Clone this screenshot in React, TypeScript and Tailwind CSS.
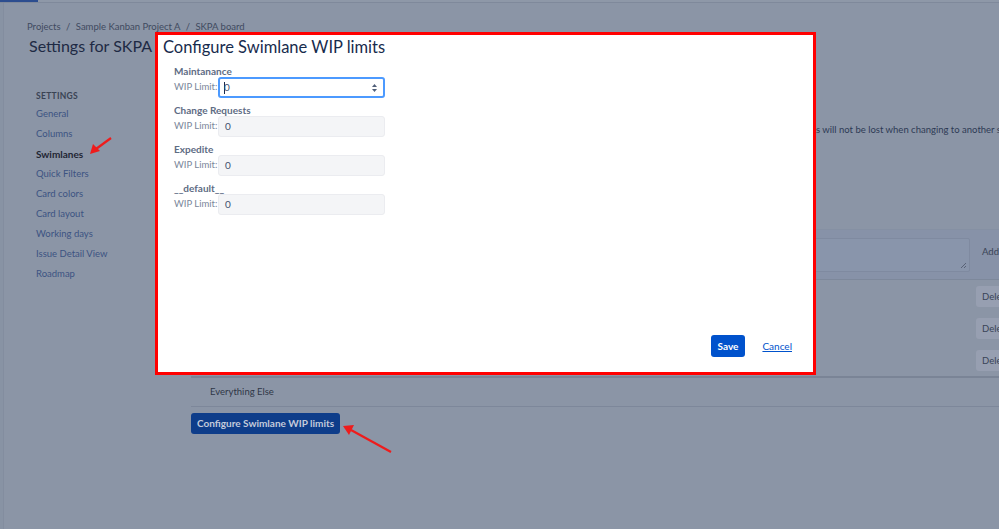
import React from "react";

const nav = ["General", "Columns", "Swimlanes", "Quick Filters", "Card colors", "Card layout", "Working days", "Issue Detail View", "Roadmap"];

function Field({ name, focused }: { name: string; focused?: boolean }) {
  return (
    <div className="flex flex-col mb-[5px]">
      <div className="h-[13px] text-[10px] leading-[15px] font-bold text-[#5e6c84] whitespace-nowrap">{name}</div>
      <div className="flex items-center h-[21px]">
        <span className="text-[9.5px] text-[#7a869a] w-[44px] shrink-0 whitespace-nowrap">WIP Limit:</span>
        {focused ? (
          <div className="relative w-[167px] h-[21px] rounded-[3px] border-2 border-[#4c9aff] bg-white flex items-center pl-[4px]">
            <span className="w-px h-[12px] bg-[#172b4d]" />
            <span className="text-[10px] text-[#42526e] ml-[-1px]">0</span>
            <svg className="absolute right-[5px] top-[4px]" width="7" height="10" viewBox="0 0 7 10">
              <path d="M3.5 1 L6 4 L1 4 Z" fill="#505f79" />
              <path d="M3.5 9 L6 6 L1 6 Z" fill="#505f79" />
            </svg>
          </div>
        ) : (
          <div className="w-[167px] h-[21px] rounded-[3px] border border-[#ebecf0] bg-[#f4f5f7] flex items-center pl-[6px] text-[10px] text-[#42526e]">0</div>
        )}
      </div>
    </div>
  );
}

export default function App() {
  return (
    <div className="relative w-[999px] h-[529px] overflow-hidden bg-[#8b95a6] font-['Lato',sans-serif]">
      {/* top strip */}
      <div className="h-[3px] bg-[#8e98a8] border-b border-[#7f899b] flex">
        <div className="w-[38px] h-[2px] bg-[#2c4d8f]" />
      </div>
      <div className="flex h-[526px]">
        <div className="w-[4px] shrink-0 border-r border-[#838d9f] bg-[#8893a4]" />
        <div className="flex-1 min-w-0 flex flex-col">
          <div className="pl-[23px] pt-[16px] text-[9.5px] leading-[16px] text-[#3f4a60] whitespace-nowrap">
            Projects <span className="mx-[3px]">/</span> Sample Kanban Project A <span className="mx-[3px]">/</span> SKPA board
          </div>
          <div className="pl-[25px] mt-[1px] text-[16px] leading-[20px] text-[#1e2a44] whitespace-nowrap">Settings for SKPA board</div>
          <div className="flex mt-[33px]">
            {/* sidebar */}
            <div className="w-[187px] pl-[32px] shrink-0">
              <div className="text-[8.5px] font-bold tracking-[0.3px] text-[#3a4354] leading-[14px] mb-[1px]">SETTINGS</div>
              {nav.map((n) => (
                <div key={n} className={`leading-[20px] whitespace-nowrap ${n === "Swimlanes" ? "text-[10px] font-bold text-[#1f2533]" : "text-[9.5px] text-[#3c5382]"}`}>{n}</div>
              ))}
            </div>
            {/* main */}
            <div className="flex-1 min-w-0 flex flex-col">
              <div className="h-[19px] text-[14px] text-[#1e2a44]">Swimlanes</div>
              <div className="mt-[14px] flex whitespace-nowrap text-[9.5px] leading-[16px] text-[#2d3a55] overflow-hidden">
                <div className="w-[625px] shrink-0 overflow-hidden flex justify-end">
                  <span className="shrink-0">Choose a method for grouping the issues on this board into separate swimlanes. Any of your configured swimlane querie</span>
                </div>
                <span>s will not be lost when changing to another swimlane type.</span>
              </div>
              <div className="h-[91px]" />
              {/* table */}
              <div className="border-t border-[#8590a3]">
                <div className="h-[50px] bg-[#8792a8] border-b border-[#7d889b] flex items-center">
                  <div className="flex-1" />
                  <div className="w-[410px] h-[34px] shrink-0 border border-[#7f8aa0] bg-[#8995ab] relative rounded-[2px]">
                    <svg className="absolute right-[2px] bottom-[2px]" width="7" height="7" viewBox="0 0 7 7">
                      <path d="M6 1 L1 6 M6 4 L4 6" stroke="#4d5668" strokeWidth="0.8" />
                    </svg>
                  </div>
                  <div className="ml-[6px] w-[23px] shrink-0 h-[30px] pl-[6px] pt-[5px] text-[9.5px] text-[#3a4457] whitespace-nowrap overflow-hidden">Add</div>
                </div>
                {[0, 1, 2].map((i) => (
                  <div key={i} className="h-[32px] flex items-center justify-end">
                    <div className="w-[23px] h-[21px] rounded-l-[3px] bg-[#979fb1] text-[9.5px] leading-[21px] pl-[6px] text-[#3a4457] overflow-hidden whitespace-nowrap">Delete</div>
                  </div>
                ))}
                <div className="border-t-2 border-[#7a8496] h-[30px] flex items-center pl-[19px] text-[9.5px] text-[#2f3747]">Everything Else</div>
                <div className="border-t border-[#7d879a]" />
              </div>
              <div className="mt-[6px] flex">
                <div className="flex items-center h-[21px] px-[6px] rounded-[3px] bg-[#0e3d8a] text-[10px] font-bold text-[#c3cbdb] whitespace-nowrap">Configure Swimlane WIP limits</div>
              </div>
            </div>
          </div>
        </div>
      </div>

      {/* modal */}
      <div className="absolute left-[155px] top-[32px] w-[661px] h-[343px] border-[3px] border-[#ff0000] bg-white flex flex-col">
        <div className="pl-[5px] h-[24px] text-[16.5px] leading-[24px] text-[#172b4d] whitespace-nowrap">Configure Swimlane WIP limits</div>
        <div className="pl-[16px] pt-[5px] flex flex-col">
          <Field name="Maintanance" focused />
          <Field name="Change Requests" />
          <Field name="Expedite" />
          <Field name="__default__" />
        </div>
        <div className="flex-1" />
        <div className="flex items-center justify-end pr-[21px] pb-[15px]">
          <div className="h-[22px] px-[7px] rounded-[3px] bg-[#0052cc] text-white text-[10px] font-bold flex items-center">Save</div>
          <div className="ml-[17px] text-[10px] text-[#0052cc] underline">Cancel</div>
        </div>
      </div>

      {/* annotation arrows */}
      <svg className="absolute left-0 top-0 pointer-events-none" width="999" height="529">
        <line x1="111" y1="138" x2="96" y2="149" stroke="#ee1c1c" strokeWidth="2.2" />
        <path d="M90 154 L93 144 L100 151 Z" fill="#ee1c1c" />
        <line x1="391" y1="452" x2="351" y2="430" stroke="#ee1c1c" strokeWidth="2.2" />
        <path d="M343 426 L354 425 L349 435 Z" fill="#ee1c1c" />
      </svg>
    </div>
  );
}
